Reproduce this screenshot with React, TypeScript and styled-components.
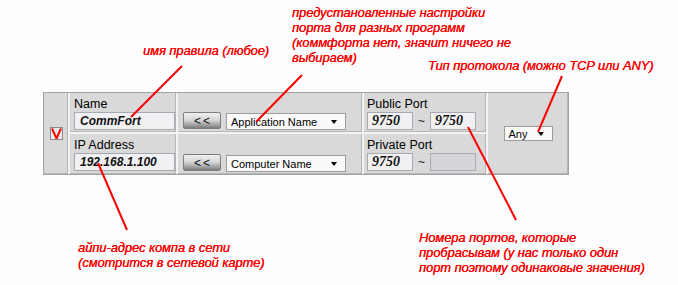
import React from 'react';
import styled, { createGlobalStyle } from 'styled-components';

const GlobalStyle = createGlobalStyle`
  html, body {
    margin: 0;
    padding: 0;
    background: #fefefe;
  }
  body {
    font-family: 'Liberation Sans', Arial, sans-serif;
  }
`;

const Page = styled.div`
  position: relative;
  width: 678px;
  height: 285px;
  box-sizing: border-box;
  padding: 92px 0 0 43px;
  overflow: hidden;
  background: #fefefe;
`;

const RuleTable = styled.div`
  display: grid;
  grid-template-columns: 24px 106px 184px 122px 80px;
  grid-template-rows: 39px 40px;
  gap: 2px;
  width: max-content;
  border: 1px solid #a2a2a2;
  background: #f3f3f3;
`;

const Cell = styled.div<{ $span?: boolean }>`
  background: #d9d9d9;
  box-shadow: inset -1px -1px 0 #b6b6b6;
  grid-row: ${p => (p.$span ? 'span 2' : 'auto')};
`;

const CenterCell = styled(Cell)`
  display: flex;
  align-items: center;
  justify-content: center;
`;

const FieldCell = styled(Cell)`
  display: flex;
  flex-direction: column;
  align-items: flex-start;
  padding: 4px 1px 0 4px;
  box-sizing: border-box;
`;

const PortCell = styled(FieldCell)`
  padding-left: 3px;
`;

const ActionCell = styled(Cell)`
  display: flex;
  align-items: flex-end;
  gap: 5px;
  padding: 0 0 2px 5px;
  box-sizing: border-box;
`;

const Label = styled.div`
  font-size: 12.5px;
  line-height: 14px;
  color: #000;
  margin-bottom: 1px;
`;

const TextBox = styled.div<{ $width: number; $serif?: boolean; $disabled?: boolean }>`
  width: ${p => p.$width}px;
  height: 18px;
  box-sizing: border-box;
  border: 1px solid #a8aab3;
  background: ${p => (p.$disabled ? '#d6d6da' : '#f1f1f4')};
  padding-left: ${p => (p.$serif ? 4 : 5)}px;
  font-family: ${p => (p.$serif ? "'Liberation Serif', 'Times New Roman', serif" : "'Liberation Sans', Arial, sans-serif")};
  font-size: ${p => (p.$serif ? 14 : 12)}px;
  font-weight: bold;
  font-style: italic;
  line-height: 16px;
  color: #111;
`;

const PortRow = styled.div`
  display: flex;
  align-items: center;
`;

const Tilde = styled.span`
  margin: 0 5px;
  font-size: 12px;
  color: #222;
`;

const PickButton = styled.div`
  width: 38px;
  height: 17px;
  margin-bottom: 1px;
  box-sizing: border-box;
  border: 1px solid #7e7e7e;
  border-radius: 2px;
  background: linear-gradient(#f0f0f0 0%, #d8d8d8 45%, #a0a0a0 80%, #7c7c7c 100%);
  display: flex;
  align-items: center;
  justify-content: center;
  font-size: 12px;
  letter-spacing: 2px;
  padding-left: 2px;
  color: #111;
`;

const Select = styled.div<{ $width: number; $height: number }>`
  width: ${p => p.$width}px;
  height: ${p => p.$height}px;
  box-sizing: border-box;
  border: 1px solid #9c9c9c;
  background: #fafafa;
  display: flex;
  align-items: center;
  justify-content: space-between;
  padding: 0 8px 0 4px;
  font-size: 11px;
  color: #000;

  &::after {
    content: '';
    border-left: 3px solid transparent;
    border-right: 3px solid transparent;
    border-top: 4px solid #000;
  }
`;

const CheckBox = styled.div`
  width: 13px;
  height: 13px;
  box-sizing: border-box;
  border: 1px solid #8a8a8a;
  background: #ececec;
  display: flex;
  align-items: center;
  justify-content: center;
`;

const Note = styled.div<{ $x: number; $y: number }>`
  position: absolute;
  left: ${p => p.$x}px;
  top: ${p => p.$y}px;
  font-size: 12.8px;
  line-height: 15px;
  font-style: italic;
  color: #ff0000;
  white-space: nowrap;
  text-shadow: 0.3px 0 0 #ff0000;
`;

const Pointers = styled.svg`
  position: absolute;
  left: 0;
  top: 0;
  pointer-events: none;
`;

const pointers = [
  [182, 66, 131, 117],
  [302, 75, 256, 122],
  [562, 76, 538, 132],
  [98, 163, 127, 230],
  [468, 127, 516, 220],
];

export default function App() {
  return (
    <>
      <GlobalStyle />
      <Page>
        <RuleTable>
          <CenterCell $span>
            <CheckBox>
              <svg width="11" height="11" viewBox="0 0 11 11">
                <path d="M1 0.5 L5.5 10.5 L10 0.5" fill="none" stroke="#ff0000" strokeWidth="2" />
              </svg>
            </CheckBox>
          </CenterCell>

          <FieldCell>
            <Label>Name</Label>
            <TextBox $width={101}>CommFort</TextBox>
          </FieldCell>
          <ActionCell>
            <PickButton>&lt;&lt;</PickButton>
            <Select $width={120} $height={17}>Application Name</Select>
          </ActionCell>
          <PortCell>
            <Label>Public Port</Label>
            <PortRow>
              <TextBox $width={46} $serif>9750</TextBox>
              <Tilde>~</Tilde>
              <TextBox $width={46} $serif>9750</TextBox>
            </PortRow>
          </PortCell>

          <CenterCell $span>
            <Select $width={49} $height={15}>Any</Select>
          </CenterCell>

          <FieldCell>
            <Label>IP Address</Label>
            <TextBox $width={101}>192.168.1.100</TextBox>
          </FieldCell>
          <ActionCell>
            <PickButton>&lt;&lt;</PickButton>
            <Select $width={120} $height={17}>Computer Name</Select>
          </ActionCell>
          <PortCell>
            <Label>Private Port</Label>
            <PortRow>
              <TextBox $width={46} $serif>9750</TextBox>
              <Tilde>~</Tilde>
              <TextBox $width={46} $serif $disabled />
            </PortRow>
          </PortCell>
        </RuleTable>

        <Note $x={143} $y={43}>имя правила (любое)</Note>
        <Note $x={292} $y={5}>
          предустановленные настройки
          <br />
          порта для разных программ
          <br />
          (коммфорта нет, значит ничего не
          <br />
          выбираем)
        </Note>
        <Note $x={428} $y={58}>Тип протокола (можно TCP или ANY)</Note>
        <Note $x={78} $y={240}>
          айпи-адрес компа в сети
          <br />
          (смотрится в сетевой карте)
        </Note>
        <Note $x={419} $y={230}>
          Номера портов, которые
          <br />
          пробрасывам (у нас только один
          <br />
          порт поэтому одинаковые значения)
        </Note>

        <Pointers width="678" height="285">
          {pointers.map(([x1, y1, x2, y2], i) => (
            <line key={i} x1={x1} y1={y1} x2={x2} y2={y2} stroke="#ff0000" strokeWidth="2" />
          ))}
        </Pointers>
      </Page>
    </>
  );
}
